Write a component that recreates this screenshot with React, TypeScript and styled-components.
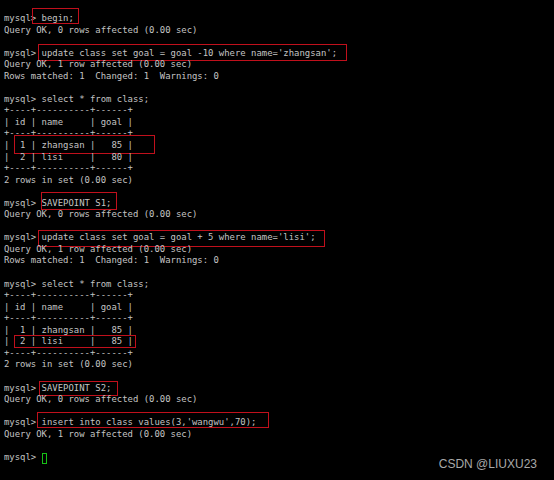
import React from "react";
import styled, { createGlobalStyle } from "styled-components";

const Global = createGlobalStyle`
  html, body { margin: 0; padding: 0; background: #000; }
  #root { width: 554px; height: 480px; }
`;

const Screen = styled.div`
  position: relative;
  width: 554px;
  height: 480px;
  background: #000;
  overflow: hidden;
  box-sizing: border-box;
  padding: 13px 0 0 4px;
`;

const Terminal = styled.div`
  display: flex;
  flex-direction: column;
  font-family: "DejaVu Sans Mono", "Liberation Mono", monospace;
  font-size: 8.94px;
  line-height: 11.553px;
  color: #c4c4c4;
`;

const Line = styled.div`
  position: relative;
  height: 11.553px;
  white-space: pre;
`;

const Mark = styled.span<{ $l: number; $t: number; $w: number; $h: number }>`
  position: absolute;
  left: ${(p) => p.$l}px;
  top: ${(p) => p.$t}px;
  width: ${(p) => p.$w}px;
  height: ${(p) => p.$h}px;
  box-sizing: border-box;
  border: 1px solid #c0101c;
  pointer-events: none;
`;

const Cursor = styled.span`
  display: inline-block;
  width: 5px;
  height: 11px;
  box-sizing: border-box;
  border: 1px solid #16c016;
  vertical-align: top;
  margin-top: 1px;
`;

const Watermark = styled.div`
  position: absolute;
  right: 17px;
  bottom: 9px;
  font-family: "Liberation Sans", Arial, sans-serif;
  font-size: 12px;
  color: #a8a8a8;
`;

type M = [number, number, number, number];
const lines: { text: string; mark?: M; cursor?: boolean }[] = [
  { text: "mysql> begin;", mark: [28, -5, 47, 16] },
  { text: "Query OK, 0 rows affected (0.00 sec)" },
  { text: "" },
  { text: "mysql> update class set goal = goal -10 where name='zhangsan';", mark: [34, -3.2, 309, 16.5] },
  { text: "Query OK, 1 row affected (0.00 sec)" },
  { text: "Rows matched: 1  Changed: 1  Warnings: 0" },
  { text: "" },
  { text: "mysql> select * from class;" },
  { text: "+----+----------+------+" },
  { text: "| id | name     | goal |" },
  { text: "+----+----------+------+" },
  { text: "|  1 | zhangsan |   85 |", mark: [10, -5, 141, 19] },
  { text: "|  2 | lisi     |   80 |" },
  { text: "+----+----------+------+" },
  { text: "2 rows in set (0.00 sec)" },
  { text: "" },
  { text: "mysql> SAVEPOINT S1;", mark: [37, -6, 76, 18] },
  { text: "Query OK, 0 rows affected (0.00 sec)" },
  { text: "" },
  { text: "mysql> update class set goal = goal + 5 where name='lisi';", mark: [34, -2.5, 287, 17] },
  { text: "Query OK, 1 row affected (0.00 sec)" },
  { text: "Rows matched: 1  Changed: 1  Warnings: 0" },
  { text: "" },
  { text: "mysql> select * from class;" },
  { text: "+----+----------+------+" },
  { text: "| id | name     | goal |" },
  { text: "+----+----------+------+" },
  { text: "|  1 | zhangsan |   85 |" },
  { text: "|  2 | lisi     |   85 |", mark: [10, -1.5, 122, 13] },
  { text: "+----+----------+------+" },
  { text: "2 rows in set (0.00 sec)" },
  { text: "" },
  { text: "mysql> SAVEPOINT S2;", mark: [35, -1.7, 79, 15] },
  { text: "Query OK, 0 rows affected (0.00 sec)" },
  { text: "" },
  { text: "mysql> insert into class values(3,'wangwu',70);", mark: [33, -5.4, 232, 16] },
  { text: "Query OK, 1 row affected (0.00 sec)" },
  { text: "" },
  { text: "mysql> ", cursor: true },
];

export default function App() {
  return (
    <>
      <Global />
      <Screen>
        <Terminal>
          {lines.map((ln, i) => (
            <Line key={i}>
              {ln.text}
              {ln.cursor && <Cursor />}
              {ln.mark && <Mark $l={ln.mark[0]} $t={ln.mark[1]} $w={ln.mark[2]} $h={ln.mark[3]} />}
            </Line>
          ))}
        </Terminal>
        <Watermark>CSDN @LIUXU23</Watermark>
      </Screen>
    </>
  );
}
